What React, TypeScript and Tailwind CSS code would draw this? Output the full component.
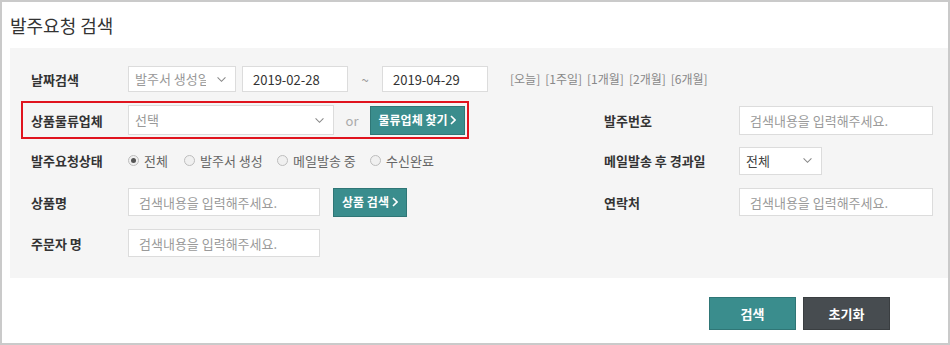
import React from 'react';

const Chevron = ({ className = '' }: { className?: string }) => (
  <svg viewBox="0 0 12 8" className={className} fill="none" stroke="currentColor" strokeWidth="1.2">
    <path d="M1.5 1.5 6 6l4.5-4.5" />
  </svg>
);

const ArrowRight = () => (
  <svg viewBox="0 0 6 10" className="w-[6px] h-[10px] ml-[3px]" fill="none" stroke="currentColor" strokeWidth="1.6">
    <path d="M1 1l4 4-4 4" />
  </svg>
);

const Label = ({ children, w = 'w-[97px]' }: { children: React.ReactNode; w?: string }) => (
  <div className={`${w} shrink-0 text-[13px] font-bold text-[#333]`}>{children}</div>
);

const TextInput = ({ w, h = 'h-[28px]' }: { w: string; h?: string }) => (
  <div className={`${w} ${h} border border-[#dcdcdc] bg-white flex items-center pl-[10px] text-[13px] text-[#9a9a9a]`}>
    검색내용을 입력해주세요.
  </div>
);

const Select = ({ w, h, text, dark = false }: { w: string; h: string; text: string; dark?: boolean }) => (
  <div className={`${w} ${h} border border-[#dcdcdc] bg-white flex items-center pl-[6px] pr-[8px] text-[13px]`}>
    <span className={`flex-1 min-w-0 overflow-hidden whitespace-nowrap leading-[18px] mr-[10px] ${dark ? 'text-[#444]' : 'text-[#999]'}`}>{text}</span>
    <Chevron className="w-[11px] h-[7px] text-[#888] shrink-0" />
  </div>
);

const Radio = ({ label, checked = false }: { label: string; checked?: boolean }) => (
  <label className="flex items-center gap-[5px] text-[13px] text-[#666]">
    <span className="w-[11px] h-[11px] rounded-full border border-[#bdbdbd] bg-[#f0f0f0] flex items-center justify-center">
      {checked && <span className="w-[5px] h-[5px] rounded-full bg-[#555]" />}
    </span>
    {label}
  </label>
);

const TealButton = ({ children, w }: { children: React.ReactNode; w: string }) => (
  <button className={`${w} h-[29px] bg-[#3a8d8d] border border-[#2f7676] text-white text-[12px] font-bold flex items-center justify-center`}>
    {children}
  </button>
);

export default function App() {
  return (
    <div className="w-[950px] h-[345px] border-2 border-[#cacaca] bg-white font-['Noto_Sans_CJK_KR',sans-serif] leading-none">
      <h1 className="pl-[8px] pt-[14px] h-[46px] text-[18px] text-[#333] font-normal">발주요청 검색</h1>

      <div className="ml-[8px] bg-[#f5f5f5] pt-[16px] pb-[20px] pl-[11px]">
        {/* 날짜검색 */}
        <div className="h-[30px] flex items-center pl-[10px]">
          <Label>날짜검색</Label>
          <Select w="w-[108px]" h="h-[26px]" text="발주서 생성일" />
          <div className="ml-[6px] w-[106px] h-[26px] border border-[#dcdcdc] bg-white flex items-center pl-[10px] text-[13px] text-[#333]">2019-02-28</div>
          <span className="w-[34px] text-center text-[13px] text-[#999]">~</span>
          <div className="w-[106px] h-[26px] border border-[#dcdcdc] bg-white flex items-center pl-[10px] text-[13px] text-[#333]">2019-04-29</div>
          <div className="ml-[22px] flex gap-[5px] text-[12px] text-[#888]">
            <span>[오늘]</span>
            <span>[1주일]</span>
            <span>[1개월]</span>
            <span>[2개월]</span>
            <span>[6개월]</span>
          </div>
        </div>

        {/* 상품물류업체 / 발주번호 */}
        <div className="mt-[7px] h-[38px] flex items-center">
          <div className="w-[583px] shrink-0">
            <div className="w-[448px] h-[38px] border-2 border-[#e0141e] flex items-center pl-[8px]">
              <Label>상품물류업체</Label>
              <Select w="w-[206px]" h="h-[30px]" text="선택" />
              <span className="w-[36px] text-center text-[13px] text-[#aaa]">or</span>
              <TealButton w="w-[95px]">물류업체 찾기<ArrowRight /></TealButton>
            </div>
          </div>
          <Label w="w-[135px]">발주번호</Label>
          <TextInput w="w-[194px]" h="h-[29px]" />
        </div>

        {/* 발주요청상태 / 메일발송 후 경과일 */}
        <div className="mt-[7px] h-[29px] flex items-center">
          <div className="w-[583px] shrink-0 flex items-center pl-[10px]">
            <Label>발주요청상태</Label>
            <div className="flex items-center">
              <div className="w-[56px]"><Radio label="전체" checked /></div>
              <div className="w-[93px]"><Radio label="발주서 생성" /></div>
              <div className="w-[93px]"><Radio label="메일발송 중" /></div>
              <Radio label="수신완료" />
            </div>
          </div>
          <Label w="w-[135px]">메일발송 후 경과일</Label>
          <Select w="w-[83px]" h="h-[28px]" text="전체" dark />
        </div>

        {/* 상품명 / 연락처 */}
        <div className="mt-[12px] h-[30px] flex items-center">
          <div className="w-[583px] shrink-0 flex items-center pl-[10px]">
            <Label>상품명</Label>
            <TextInput w="w-[192px]" />
            <div className="ml-[13px]">
              <TealButton w="w-[74px]">상품 검색<ArrowRight /></TealButton>
            </div>
          </div>
          <Label w="w-[135px]">연락처</Label>
          <TextInput w="w-[194px]" />
        </div>

        {/* 주문자 명 */}
        <div className="mt-[11px] h-[30px] flex items-center pl-[10px]">
          <Label>주문자 명</Label>
          <TextInput w="w-[192px]" />
        </div>
      </div>

      <div className="flex justify-end gap-[7px] pr-[58px] pt-[19px]">
        <button className="w-[87px] h-[33px] bg-[#3a8d8d] border border-[#2f7676] text-white text-[13px] font-bold">검색</button>
        <button className="w-[87px] h-[33px] bg-[#474c50] border border-[#3a3e41] text-white text-[13px] font-bold">초기화</button>
      </div>
    </div>
  );
}
